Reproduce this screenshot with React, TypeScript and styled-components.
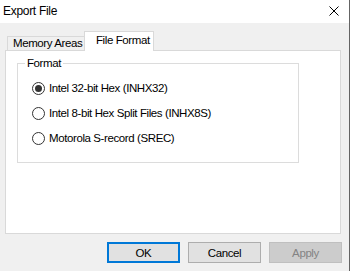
import React, { FC } from 'react'
import styled, { createGlobalStyle } from 'styled-components'

const GlobalStyle = createGlobalStyle`
html, body {
    margin: 0;
    padding: 0;
    background: #ffffff;
}
* {
    box-sizing: border-box;
}
`;

type radioProps = {
    label: string,
    checked?: boolean,
};

const Radio: FC<radioProps> = ({ label, checked }) => {
    return <RadioRowStyled>
        <RadioCircle>{checked && <RadioDot />}</RadioCircle>
        <RadioLabel>{label}</RadioLabel>
    </RadioRowStyled>
}

const CloseIcon: FC = () => (
    <svg width="10" height="10" viewBox="0 0 10 10">
        <path d="M0.5 0.5 L9.5 9.5 M9.5 0.5 L0.5 9.5" stroke="#000" strokeWidth="1" fill="none" />
    </svg>
);

export default function App() {
    return <>
        <GlobalStyle />
        <WindowStyled>
            <TitleBar>
                <TitleText>Export File</TitleText>
                <CloseButton><CloseIcon /></CloseButton>
            </TitleBar>

            <DialogBody>
                <TabStrip>
                    <Tab>Memory Areas</Tab>
                    <Tab active>File Format</Tab>
                </TabStrip>

                <TabPanel>
                    <GroupBox>
                        <GroupLegend>Format</GroupLegend>
                        <RadioList>
                            <Radio label="Intel 32-bit Hex (INHX32)" checked />
                            <Radio label="Intel 8-bit Hex Split Files (INHX8S)" />
                            <Radio label="Motorola S-record (SREC)" />
                        </RadioList>
                    </GroupBox>
                </TabPanel>

                <ButtonRow>
                    <DialogButton variant="default">OK</DialogButton>
                    <DialogButton>Cancel</DialogButton>
                    <DialogButton variant="disabled">Apply</DialogButton>
                </ButtonRow>
            </DialogBody>
        </WindowStyled>
    </>
}

// ui text is a little narrower than arial in the original, hence the negative spacing
const uiFont = `
font-size: 11.5px;
letter-spacing: -0.4px;
`;

const WindowStyled = styled.div`
width: 350px;
height: 271px;
background: #f0f0f0;
border-right: 1px solid #646464;
font-family: "Liberation Sans", Arial, sans-serif;
color: #000;
`;

const TitleBar = styled.div`
height: 23px;
background: #ffffff;
display: flex;
align-items: center;
justify-content: space-between;
padding: 0 10px 0 3px;
`;

const TitleText = styled.span`
font-size: 12px;
letter-spacing: -0.3px;
line-height: 14px;
margin-top: -2px;
`;

const CloseButton = styled.span`
display: flex;
width: 10px;
height: 10px;
margin-top: -1px;
`;

const DialogBody = styled.div`
padding: 8px 8px 0 5px;
`;

const TabStrip = styled.div`
display: flex;
align-items: flex-end;
height: 19px;
padding-left: 2px;
${uiFont}
`;

const Tab = styled.div<{ active?: boolean }>`
display: flex;
align-items: center;
border: 1px solid #d9d9d9;
border-bottom: none;
line-height: 13px;
white-space: nowrap;
${p => p.active ? `
    position: relative;
    z-index: 1;
    height: 20px;
    margin-bottom: -1px;
    margin-left: -1px;
    width: 70px;
    padding: 0 0 2px 11px;
    background: #ffffff;
` : `
    height: 14px;
    width: 78px;
    padding: 0 0 0 5px;
    background: #f0f0f0;
`}
`;

const TabPanel = styled.div`
width: 336px;
height: 184px;
border: 1px solid #d9d9d9;
background: #ffffff;
padding: 5px 0 0 11px;
`;

const GroupBox = styled.fieldset`
margin: 0;
padding: 0 0 11px 0;
width: 282px;
border: 1px solid #dcdcdc;
min-inline-size: 0;
`;

const GroupLegend = styled.legend`
margin-left: 7px;
padding: 0 2px;
line-height: 14px;
${uiFont}
`;

const RadioList = styled.div`
display: flex;
flex-direction: column;
padding: 6px 0 0 14px;
`;

const RadioRowStyled = styled.label`
display: flex;
align-items: center;
height: 25px;
gap: 4px;
${uiFont}
`;

const RadioCircle = styled.span`
display: flex;
align-items: center;
justify-content: center;
width: 13px;
height: 13px;
border: 1px solid #333333;
border-radius: 50%;
background: #ffffff;
flex: 0 0 13px;
`;

const RadioDot = styled.span`
width: 7px;
height: 7px;
border-radius: 50%;
background: #333333;
`;

const RadioLabel = styled.span`
line-height: 13px;
`;

const ButtonRow = styled.div`
display: flex;
justify-content: flex-end;
gap: 8px;
margin: 8px -1px 0 0;
`;

const DialogButton = styled.div<{ variant?: 'default' | 'disabled' }>`
width: 73px;
height: 21px;
display: flex;
align-items: center;
justify-content: center;
${uiFont}
background: ${p => p.variant === 'disabled' ? '#cccccc' : '#e1e1e1'};
color: ${p => p.variant === 'disabled' ? '#838383' : '#000000'};
border: ${p => p.variant === 'default' ? '2px solid #0078d7' : p.variant === 'disabled' ? '1px solid #bfbfbf' : '1px solid #adadad'};
`;
